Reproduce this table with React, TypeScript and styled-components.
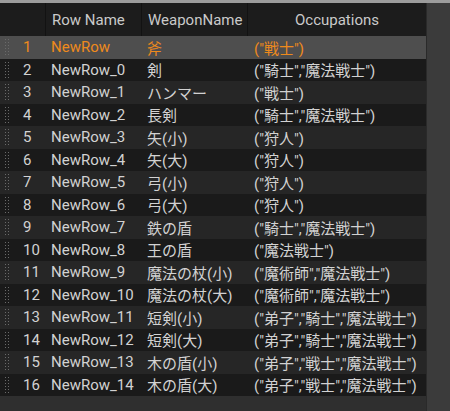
import React from "react";
import styled, { createGlobalStyle } from "styled-components";

const Global = createGlobalStyle`
  html, body { margin: 0; padding: 0; background: #303030; }
  body { width: 450px; height: 411px; overflow: hidden; font-family: Roboto, "Noto Sans CJK JP", sans-serif; }
`;

const Page = styled.div`
  width: 450px;
  height: 411px;
  display: flex;
  flex-direction: column;
  background: #303030;
`;

const TopLine = styled.div`
  height: 3px;
  background: #9c9c9c;
  flex: none;
`;

const Body = styled.div`
  flex: 1;
  display: flex;
`;

const TableArea = styled.div`
  width: 426px;
  display: flex;
  flex-direction: column;
  background: #2f2f2f;
`;

const SidePanel = styled.div`
  flex: 1;
  background: #3b3b3b;
  border-left: 1px solid #2a2a2a;
`;

const cols = "16px 29px 96px 106px 1fr";

const HeaderRow = styled.div`
  display: grid;
  grid-template-columns: ${cols};
  height: 33px;
  background: #1c1c1c;
  color: #cacaca;
  font-size: 15px;
`;

const HeaderCell = styled.div<{ $center?: boolean; $divider?: boolean }>`
  display: flex;
  align-items: center;
  justify-content: ${(p) => (p.$center ? "center" : "flex-start")};
  padding-left: ${(p) => (p.$center ? "0" : "6px")};
  border-left: ${(p) => (p.$divider ? "1px solid #121212" : "none")};
`;

const Row = styled.div<{ $selected?: boolean; $alt?: boolean }>`
  display: grid;
  grid-template-columns: ${cols};
  height: 22.5px;
  background: ${(p) => (p.$selected ? "#4e4e4e" : p.$alt ? "#262626" : "#1a1a1a")};
  color: ${(p) => (p.$selected ? "#ee8a1c" : "#d2d2d2")};
  font-size: 15px;
`;

const Cell = styled.div<{ $pad?: number }>`
  display: flex;
  align-items: center;
  padding-left: ${(p) => p.$pad ?? 6}px;
  white-space: nowrap;
  overflow: hidden;
`;

const Grip = styled.div`
  display: flex;
  align-items: center;
  padding-left: 4px;
`;

const GripDots = styled.div`
  width: 5px;
  height: 18px;
  background-image: radial-gradient(circle, #6a6a6a 0.9px, transparent 1px);
  background-size: 3px 3px;
  background-position: 0 0;
`;

const data: [string, string, string][] = [
  ["NewRow", "斧", '("戦士")'],
  ["NewRow_0", "剣", '("騎士","魔法戦士")'],
  ["NewRow_1", "ハンマー", '("戦士")'],
  ["NewRow_2", "長剣", '("騎士","魔法戦士")'],
  ["NewRow_3", "矢(小)", '("狩人")'],
  ["NewRow_4", "矢(大)", '("狩人")'],
  ["NewRow_5", "弓(小)", '("狩人")'],
  ["NewRow_6", "弓(大)", '("狩人")'],
  ["NewRow_7", "鉄の盾", '("騎士","魔法戦士")'],
  ["NewRow_8", "王の盾", '("魔法戦士")'],
  ["NewRow_9", "魔法の杖(小)", '("魔術師","魔法戦士")'],
  ["NewRow_10", "魔法の杖(大)", '("魔術師","魔法戦士")'],
  ["NewRow_11", "短剣(小)", '("弟子","騎士","魔法戦士")'],
  ["NewRow_12", "短剣(大)", '("弟子","騎士","魔法戦士")'],
  ["NewRow_13", "木の盾(小)", '("弟子","戦士","魔法戦士")'],
  ["NewRow_14", "木の盾(大)", '("弟子","戦士","魔法戦士")'],
];

export default function App() {
  return (
    <Page>
      <Global />
      <TopLine />
      <Body>
        <TableArea>
          <HeaderRow>
            <HeaderCell />
            <HeaderCell />
            <HeaderCell $divider>Row Name</HeaderCell>
            <HeaderCell $divider>WeaponName</HeaderCell>
            <HeaderCell $divider $center>Occupations</HeaderCell>
          </HeaderRow>
          {data.map((d, i) => (
            <Row key={i} $selected={i === 0} $alt={i % 2 === 0}>
              <Grip>
                <GripDots />
              </Grip>
              <Cell $pad={7}>{i + 1}</Cell>
              <Cell>{d[0]}</Cell>
              <Cell>{d[1]}</Cell>
              <Cell $pad={7}>{d[2]}</Cell>
            </Row>
          ))}
        </TableArea>
        <SidePanel />
      </Body>
    </Page>
  );
}
